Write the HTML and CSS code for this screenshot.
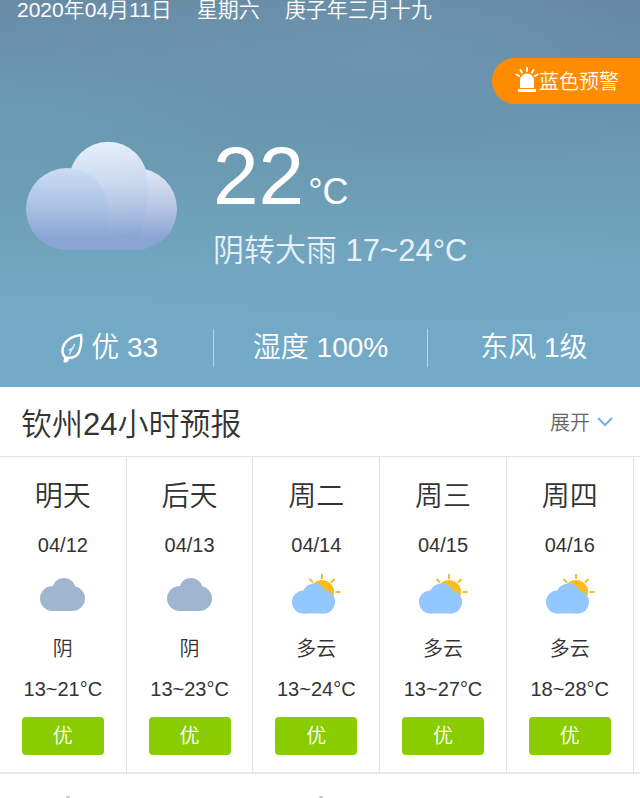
FILE: index.html
```html
<!DOCTYPE html>
<html lang="zh-CN">

<head>
    <meta charset="UTF-8">
    <meta name="viewport" content="width=device-width, initial-scale=1.0">
    <title>钦州天气预报</title>
    <link rel="stylesheet" href="styles.css">
</head>

<body>
    <svg class="symbols" aria-hidden="true">
        <symbol id="cloudy" viewBox="0 0 50 42">
            <g fill="#a0b6d0">
                <circle cx="14.500" cy="25.500" r="12.500" />
                <circle cx="34.500" cy="25.500" r="12.500" />
                <circle cx="26" cy="16.500" r="11.500" />
                <rect x="14" y="20" width="21" height="18" />
            </g>
        </symbol>
        <symbol id="partly" viewBox="0 0 50 42">
            <g stroke="#f5bb35" stroke-width="2">
                <path d="M31 1v5M18.500 6l3.500 3.500M43.500 6L40 9.500M44.500 19h5" />
            </g>
            <circle cx="31" cy="19" r="12" fill="#fcbc1e" />
            <g fill="#92c7ff">
                <circle cx="12.500" cy="29" r="11.500" />
                <circle cx="32.500" cy="29" r="11.500" />
                <circle cx="23.500" cy="23" r="12.500" />
                <rect x="12" y="24" width="21" height="16.500" />
            </g>
        </symbol>
    </svg>

    <section class="hero">
        <div class="date">
            <span>2020年04月11日</span>
            <span>星期六</span>
            <span>庚子年三月十九</span>
        </div>

        <a class="alert" href="#alert">
            <svg width="24" height="26" viewBox="0 0 24 26" aria-hidden="true">
                <path fill="#fff" d="M5 21v-7.500a7 7 0 0 1 14 0V21zM3 22h18v3H3z" />
                <path stroke="#fff" stroke-width="2" stroke-linecap="round" d="M12 1v3M5.500 3l1.500 2.500M18.500 3L17 5.500M1.500 7.500L4 9M22.500 7.500L20 9" />
            </svg>
            <span>蓝色预警</span>
        </a>

        <div class="current">
            <svg class="current-icon" viewBox="0 0 151 110" role="img" aria-label="阴">
                <defs>
                    <linearGradient id="right" gradientUnits="userSpaceOnUse" x1="0" y1="27" x2="0" y2="109">
                        <stop offset="0" stop-color="#e2e8f5" />
                        <stop offset=".5" stop-color="#b4c4e2" />
                        <stop offset=".85" stop-color="#8aa5d4" />
                    </linearGradient>
                    <linearGradient id="left" gradientUnits="userSpaceOnUse" x1="0" y1="27" x2="0" y2="109">
                        <stop offset="0" stop-color="#ccdcf3" />
                        <stop offset=".5" stop-color="#a9c0e2" />
                        <stop offset=".85" stop-color="#8aa5d4" />
                    </linearGradient>
                    <linearGradient id="middle" gradientUnits="userSpaceOnUse" x1="76" y1="0" x2="80" y2="109">
                        <stop offset="0" stop-color="#e6f0fc" />
                        <stop offset=".4" stop-color="#c9d8ef" />
                        <stop offset=".65" stop-color="#adc0e1" />
                        <stop offset=".88" stop-color="#8aa5d4" />
                    </linearGradient>
                </defs>
                <path fill="url(#right)" d="M110 27a41 41 0 0 1 0 82H75V45z" />
                <path fill="url(#middle)" d="M43 40a39.250 39.250 0 0 1 78.500 0q2 40-14 69H43z" />
                <path fill="url(#left)" d="M41 27a41 41 0 0 1 41 41v41H41a41 41 0 0 1 0-82z" />
            </svg>
            <div class="current-info">
                <div class="temp">22<span class="unit">°C</span></div>
                <div class="summary">阴转大雨 17~24°C</div>
            </div>
        </div>

        <ul class="stats">
            <li class="air">
                <svg width="22" height="32" viewBox="2 0 22 32" fill="none" stroke="#fff" stroke-linecap="round" stroke-linejoin="round" aria-hidden="true">
                    <path stroke-width="2.500" d="M22 3C13 4 3.500 9 3.500 19c0 3 1 5 3 6.500 6 1 11 .5 13.500-5.500 2-5 3-10 2-17z" />
                    <path stroke-width="3" d="M6.500 26.500l-.5 2.500 2-.5.500-2" />
                    <path stroke-width="1.500" stroke="#d3ecfb" d="M15.500 12.500l-5 9.500M14 16l-4 2" />
                </svg>
                <span>优 33</span>
            </li>
            <li>湿度 100%</li>
            <li>东风 1级</li>
        </ul>
    </section>

    <section class="forecast">
        <div class="forecast-header">
            <h2>钦州24小时预报</h2>
            <button type="button" class="expand">
                展开
                <svg width="16" height="10" viewBox="0 0 16 10" fill="none" stroke="#6db3e8" stroke-width="2" aria-hidden="true">
                    <path d="M1 1l7 7 7-7" />
                </svg>
            </button>
        </div>

        <ul class="days">
            <li class="day">
                <h3>明天</h3>
                <p class="day-date">04/12</p>
                <svg class="day-icon" aria-hidden="true"><use href="#cloudy" /></svg>
                <p>阴</p>
                <p class="range">13~21°C</p>
                <span class="quality">优</span>
            </li>
            <li class="day">
                <h3>后天</h3>
                <p class="day-date">04/13</p>
                <svg class="day-icon" aria-hidden="true"><use href="#cloudy" /></svg>
                <p>阴</p>
                <p class="range">13~23°C</p>
                <span class="quality">优</span>
            </li>
            <li class="day">
                <h3>周二</h3>
                <p class="day-date">04/14</p>
                <svg class="day-icon" aria-hidden="true"><use href="#partly" /></svg>
                <p>多云</p>
                <p class="range">13~24°C</p>
                <span class="quality">优</span>
            </li>
            <li class="day">
                <h3>周三</h3>
                <p class="day-date">04/15</p>
                <svg class="day-icon" aria-hidden="true"><use href="#partly" /></svg>
                <p>多云</p>
                <p class="range">13~27°C</p>
                <span class="quality">优</span>
            </li>
            <li class="day">
                <h3>周四</h3>
                <p class="day-date">04/16</p>
                <svg class="day-icon" aria-hidden="true"><use href="#partly" /></svg>
                <p>多云</p>
                <p class="range">18~28°C</p>
                <span class="quality">优</span>
            </li>
        </ul>
    </section>

    <div class="more">
        <span></span>
        <span></span>
    </div>
</body>

</html>
```
FILE: styles.css
```css
* {
    box-sizing: border-box;
}

body {
    margin: 0;
    font-family: "Liberation Sans", "Noto Sans CJK SC", sans-serif;
    font-weight: 350;
    color: #333;
    background-color: #fff;
}

h2,
h3,
p,
ul {
    margin: 0;
    padding: 0;
    font-weight: 350;
    list-style: none;
}

.symbols {
    display: none;
}

/* Current weather */
.hero {
    color: #fff;
    padding-bottom: 20px;
    background:
        radial-gradient(ellipse 40% 22% at 60% 12%, rgba(112, 154, 180, 0.5), transparent),
        radial-gradient(ellipse 35% 16% at 20% 13%, rgba(110, 151, 176, 0.4), transparent),
        radial-gradient(ellipse 30% 30% at 100% 4%, rgba(98, 134, 162, 0.5), transparent),
        radial-gradient(ellipse 45% 18% at 65% 28%, rgba(104, 146, 172, 0.5), transparent),
        radial-gradient(ellipse 40% 20% at 0% 30%, rgba(108, 160, 184, 0.5), transparent),
        radial-gradient(ellipse 50% 16% at 70% 73%, rgba(118, 167, 195, 0.6), transparent),
        linear-gradient(#698ba4 0%, #6993ae 22%, #6a99b1 38%, #6fa2b9 60%, #72a9c5 78%, #73aac8 100%);
}

.date {
    display: flex;
    gap: 25px;
    padding: 0 17px;
    font-size: 21px;
    line-height: 20px;
}

.alert {
    display: flex;
    align-items: center;
    width: fit-content;
    height: 46px;
    margin: 38px 0 0 auto;
    padding: 0 21px 2px 23px;
    border-radius: 23px 0 0 23px;
    background-color: #ff8c00;
    color: #fff;
    font-size: 20px;
    text-decoration: none;
}

.current {
    display: flex;
    gap: 36px;
    padding: 37px 26px 0;
}

.current-icon {
    flex: none;
    width: 151px;
    height: 110px;
}

.temp {
    font-size: 82px;
    line-height: 70px;
}

.unit {
    margin-left: 4px;
    font-size: 36px;
}

.summary {
    font-size: 31px;
    line-height: 48px;
    color: #e6f0fa;
}

.stats {
    display: grid;
    grid-template-columns: repeat(3, 1fr);
    margin-top: 54px;
    font-size: 28px;
    line-height: 38px;
}

.stats li {
    display: flex;
    align-items: center;
    justify-content: center;
    gap: 8px;
}

.stats .air {
    padding-left: 6px;
}

.stats li + li {
    border-left: 1px solid rgba(255, 255, 255, 0.5);
}

/* Forecast */
.forecast {
    border-bottom: 2px solid #e8e8e8;
}

.forecast-header {
    display: flex;
    align-items: center;
    justify-content: space-between;
    height: 70px;
    padding: 0 27px 0 21px;
    border-bottom: 1px solid #e2e2e2;
}

.forecast-header h2 {
    font-size: 31px;
}

.expand {
    display: flex;
    align-items: center;
    gap: 7px;
    padding: 0;
    border: none;
    background: none;
    color: #666;
    font-family: inherit;
    font-size: 20px;
    font-weight: 350;
    cursor: pointer;
}

.days {
    display: flex;
    overflow: hidden;
}

.day {
    flex: 0 0 19.8%;
    display: flex;
    flex-direction: column;
    align-items: center;
    padding: 20px 0 17px;
    border-right: 1px solid #e2e2e2;
    font-size: 20px;
    line-height: 40px;
}

.day h3 {
    font-size: 28px;
    line-height: 40px;
}

.day-date {
    margin-top: 8px;
}

.day-icon {
    width: 50px;
    height: 42px;
    margin: 8px 0 14px;
}

.quality {
    width: 82px;
    margin-top: 8px;
    border-radius: 4px;
    background-color: #89cc00;
    color: #fff;
    line-height: 38px;
    text-align: center;
}

/* Top edge of the next block */
.more {
    display: flex;
    padding: 22px 66px 0;
    gap: 249px;
}

.more span {
    width: 4px;
    height: 2px;
    border-radius: 2px;
    background-color: #ccc;
}
```
